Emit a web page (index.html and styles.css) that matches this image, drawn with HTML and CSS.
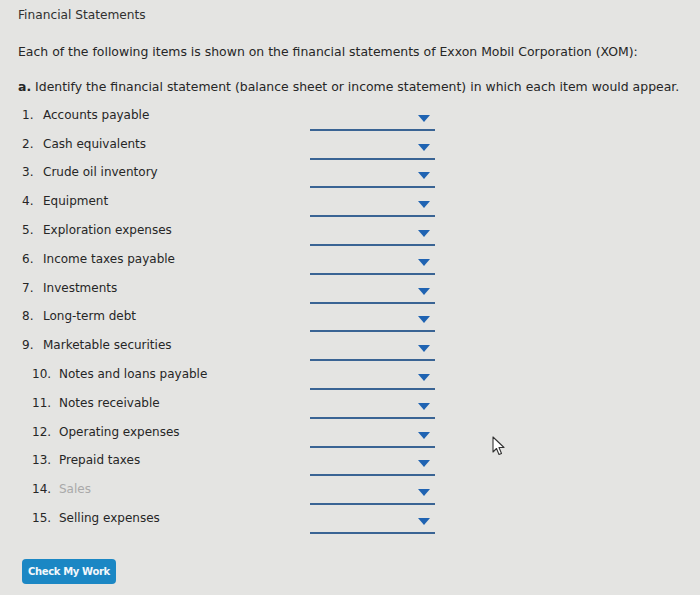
FILE: index.html
```html
<!DOCTYPE html>
<html lang="en">
<head>
<meta charset="utf-8">
<title>Financial Statements</title>
<link rel="stylesheet" href="styles.css">
</head>
<body>
<main class="page">
  <h1 class="title">Financial Statements</h1>
  <p class="intro">Each of the following items is shown on the financial statements of Exxon Mobil Corporation (XOM):</p>
  <p class="part"><b>a.</b> Identify the financial statement (balance sheet or income statement) in which each item would appear.</p>
  <ol class="items">
    <li class="item"><span class="label"><span class="num">1.</span>Accounts payable</span><span class="select"><span class="caret"></span></span></li>
    <li class="item"><span class="label"><span class="num">2.</span>Cash equivalents</span><span class="select"><span class="caret"></span></span></li>
    <li class="item"><span class="label"><span class="num">3.</span>Crude oil inventory</span><span class="select"><span class="caret"></span></span></li>
    <li class="item"><span class="label"><span class="num">4.</span>Equipment</span><span class="select"><span class="caret"></span></span></li>
    <li class="item"><span class="label"><span class="num">5.</span>Exploration expenses</span><span class="select"><span class="caret"></span></span></li>
    <li class="item"><span class="label"><span class="num">6.</span>Income taxes payable</span><span class="select"><span class="caret"></span></span></li>
    <li class="item"><span class="label"><span class="num">7.</span>Investments</span><span class="select"><span class="caret"></span></span></li>
    <li class="item"><span class="label"><span class="num">8.</span>Long-term debt</span><span class="select"><span class="caret"></span></span></li>
    <li class="item"><span class="label"><span class="num">9.</span>Marketable securities</span><span class="select"><span class="caret"></span></span></li>
    <li class="item wide"><span class="label"><span class="num">10.</span>Notes and loans payable</span><span class="select"><span class="caret"></span></span></li>
    <li class="item wide"><span class="label"><span class="num">11.</span>Notes receivable</span><span class="select"><span class="caret"></span></span></li>
    <li class="item wide"><span class="label"><span class="num">12.</span>Operating expenses</span><span class="select"><span class="caret"></span></span></li>
    <li class="item wide"><span class="label"><span class="num">13.</span>Prepaid taxes</span><span class="select"><span class="caret"></span></span></li>
    <li class="item wide"><span class="label"><span class="num">14.</span><span class="faded">Sales</span></span><span class="select"><span class="caret"></span></span></li>
    <li class="item wide"><span class="label"><span class="num">15.</span>Selling expenses</span><span class="select"><span class="caret"></span></span></li>
  </ol>
  <button class="check" type="button">Check My Work</button>
</main>
<svg class="cursor" width="14" height="20" viewBox="0 0 14 20" aria-hidden="true">
  <path d="M1 1 L1 16 L4.5 12.5 L7 18.5 L9.5 17.5 L7 11.5 L12 11.5 Z" fill="#ffffff" stroke="#333" stroke-width="1.1" stroke-linejoin="round"/>
</svg>
</body>
</html>
```

FILE: styles.css
```css
html, body {
  margin: 0;
  padding: 0;
}

body {
  background: #e4e4e2;
  color: #262626;
  font-family: "DejaVu Sans", Verdana, sans-serif;
  font-size: 12.45px;
  width: 700px;
  height: 595px;
  overflow: hidden;
  position: relative;
}

.page {
  padding: 7px 0 0 18px;
}

.title {
  font-size: 12.2px;
  font-weight: normal;
  margin: 0;
  line-height: 16px;
  color: #303030;
}

.intro {
  margin: 21px 0 0;
  line-height: 16px;
}

.part {
  margin: 19px 0 0;
  line-height: 16px;
}

.items {
  list-style: none;
  margin: 7px 0 0;
  padding: 0;
  font-size: 12px;
}

.item {
  display: flex;
  height: 28.8px;
  align-items: stretch;
}

.label {
  width: 292px;
  padding-left: 4px;
  display: flex;
  align-items: center;
  padding-bottom: 3px;
  box-sizing: border-box;
}

.num {
  display: inline-block;
  width: 21px;
}

.wide .label {
  padding-left: 14px;
}

.wide .num {
  width: 27px;
}

.faded {
  color: #a9a9a9;
}

.select {
  width: 125px;
  border-bottom: 2px solid #3a6494;
  position: relative;
  box-sizing: border-box;
}

.caret {
  position: absolute;
  right: 5px;
  bottom: 7px;
  width: 0;
  height: 0;
  border-left: 6px solid transparent;
  border-right: 6px solid transparent;
  border-top: 7px solid #1f63b2;
}

.check {
  margin: 25px 0 0 4px;
  padding: 0 6px;
  height: 25px;
  border: none;
  border-radius: 4px;
  background: #1b87c4;
  color: #f4f8fb;
  font-family: "DejaVu Sans", Verdana, sans-serif;
  font-size: 10px;
  font-weight: bold;
  letter-spacing: -0.35px;
}

.cursor {
  position: absolute;
  left: 492px;
  top: 436px;
}
```
